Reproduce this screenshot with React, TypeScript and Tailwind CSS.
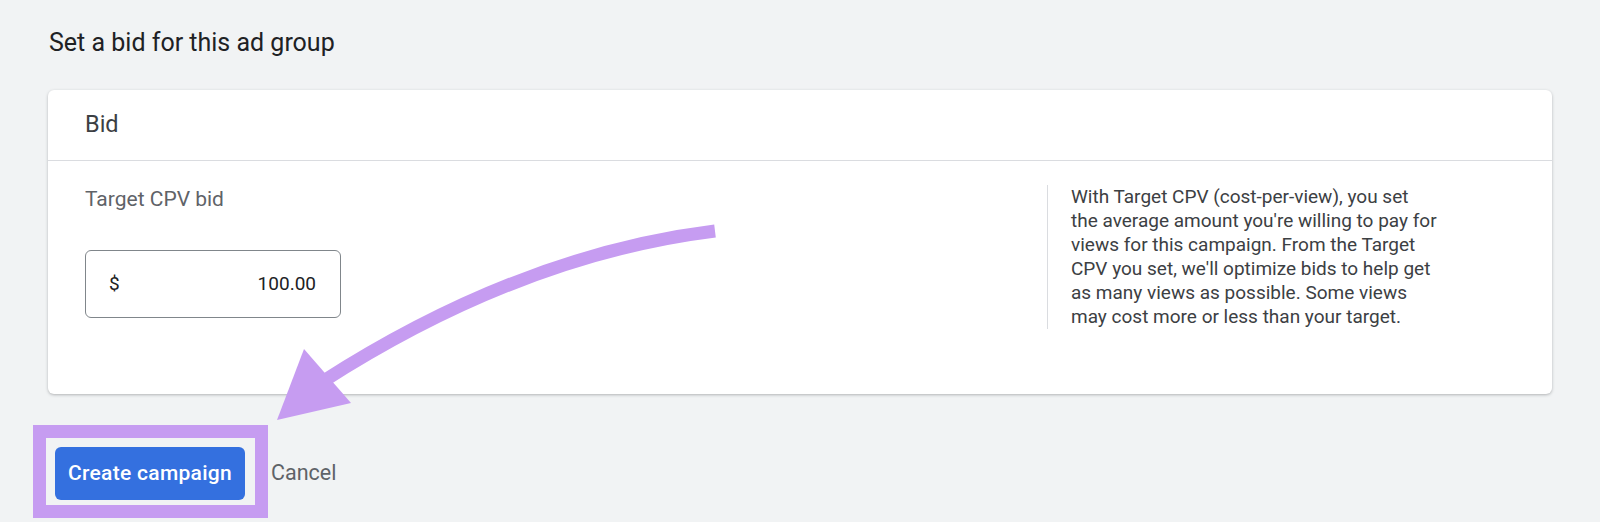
import React from 'react';

const HELP_LINES = [
  'With Target CPV (cost-per-view), you set',
  "the average amount you're willing to pay for",
  'views for this campaign. From the Target',
  "CPV you set, we'll optimize bids to help get",
  'as many views as possible. Some views',
  'may cost more or less than your target.',
];

const Arrow: React.FC = () => (
  <svg
    className="absolute inset-0 pointer-events-none"
    width={1600}
    height={522}
    viewBox="0 0 1600 522"
  >
    <path d="M715 231 Q520 255 322 382" fill="none" stroke="#c69cf1" strokeWidth={13} />
    <polygon points="277,420 304,349 351,403" fill="#c69cf1" />
  </svg>
);

const App: React.FC = () => {
  return (
    <div
      className="relative w-[1600px] h-[522px] overflow-hidden bg-[#f1f3f4] text-[#202124]"
      style={{ fontFamily: 'Roboto, "Noto Sans", sans-serif' }}
    >
      {/* Title */}
      <h2 className="pl-[49px] pt-[28px] text-[25px] leading-[30px] text-[#202124]">
        Set a bid for this ad group
      </h2>

      {/* Bid card */}
      <div className="mx-[48px] mt-[32px] bg-white rounded-[6px] shadow-[0_1px_3px_rgba(60,64,67,0.35)]">
        <div className="h-[71px] flex items-center px-[37px] border-b border-[#dadce0]">
          <span className="text-[23.5px] text-[#3c4043]">Bid</span>
        </div>

        <div className="h-[233px] flex items-start">
          <div className="flex-1 pl-[37px] pt-[26px]">
            <p className="text-[21px] leading-[24px] text-[#5f6368]">Target CPV bid</p>
            <div className="mt-[39px] w-[256px] h-[68px] rounded-[6px] border border-[#80868b] flex items-center justify-between pl-[23px] pr-[24px] text-[19px] text-[#202124]">
              <span>$</span>
              <span>100.00</span>
            </div>
          </div>

          <div className="w-[505px] mt-[24px] border-l border-[#dadce0] pl-[23px] text-[19px] leading-[24px] text-[#3c4043]">
            {HELP_LINES.map(line => (
              <div key={line} className="whitespace-nowrap">{line}</div>
            ))}
          </div>
        </div>
      </div>

      {/* Actions */}
      <div className="flex items-center pl-[33px] mt-[31px]">
        <div className="border-[13px] border-[#c69cf1] pl-[9px] pr-[10px] pt-[9px] pb-[5px]">
          <button className="w-[190px] h-[53px] rounded-[6px] bg-[#3470df] text-white text-[21px] tracking-[0.3px] font-medium flex items-center justify-center">
            Create campaign
          </button>
        </div>
        <button className="ml-[3px] pt-[3px] text-[21.5px] text-[#5f6368]">Cancel</button>
      </div>

      <Arrow />
    </div>
  );
};

export default App;
